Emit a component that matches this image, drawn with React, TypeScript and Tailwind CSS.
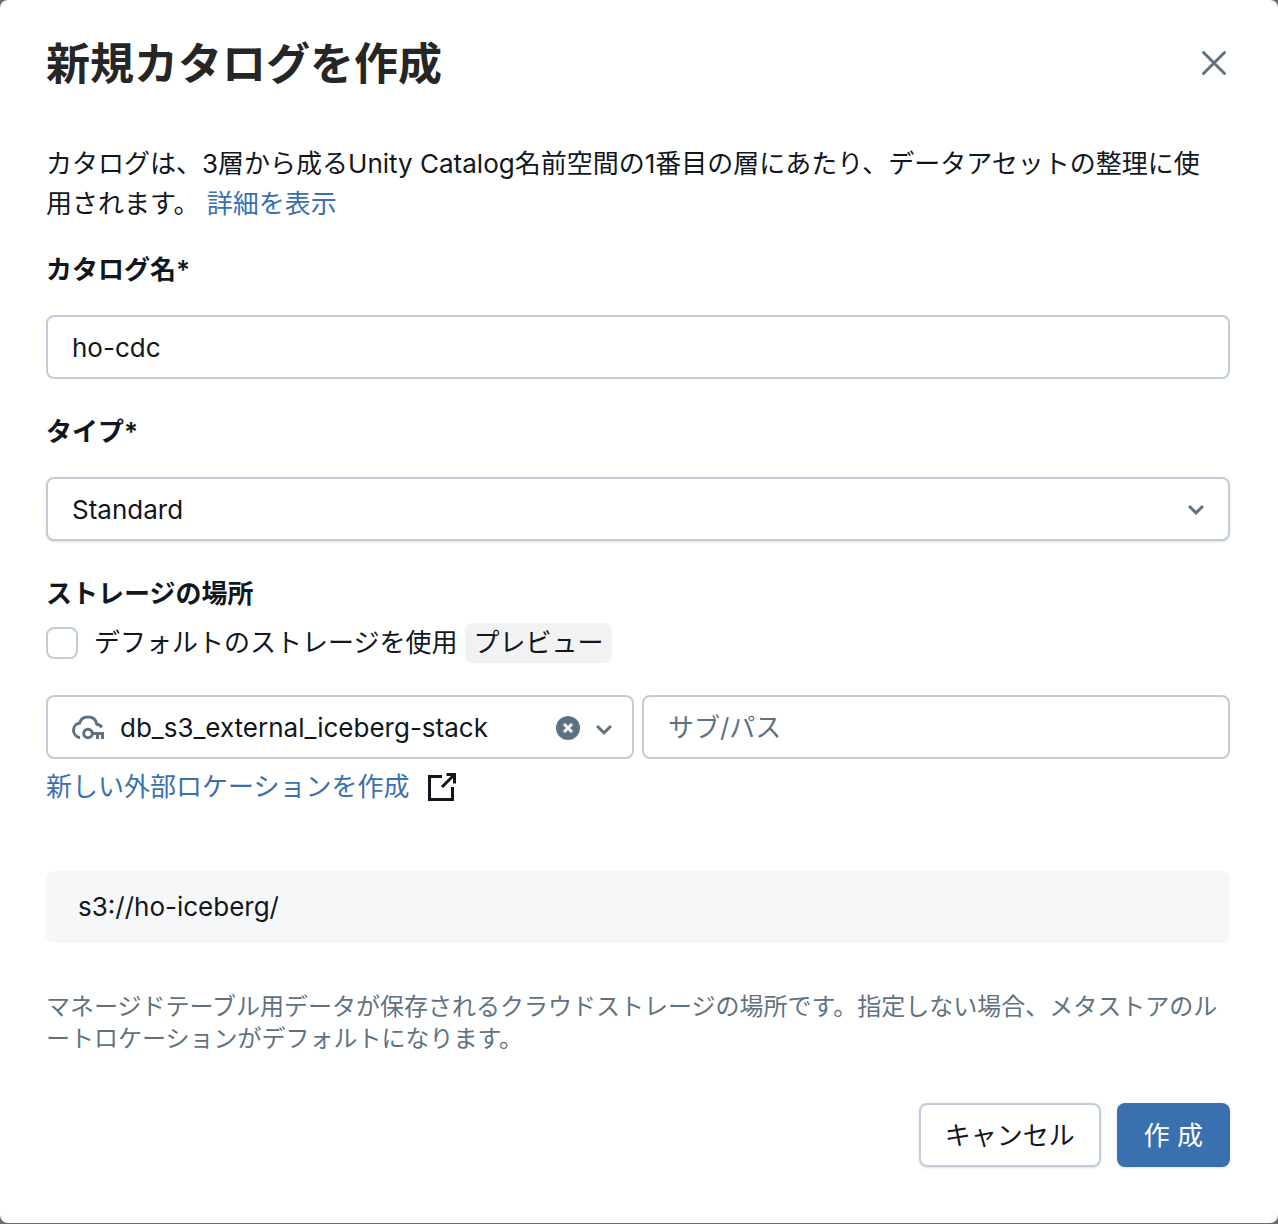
import React, { useState } from 'react';

const FIELD = 'h-16 w-full rounded-lg border-2 border-[#c0cdd8] bg-white text-[26px] text-[#11171c] outline-none placeholder:text-[#5f7281]';
const LINK = 'text-[#3a6fb0]';

function ChevronDown({ className }: { className?: string }) {
  return (
    <svg viewBox="0 0 16 16" className={className} fill="currentColor" aria-hidden="true">
      <path fillRule="evenodd" d="M8 8.917 10.947 6 12 7.042 8 11 4 7.042 5.053 6z" clipRule="evenodd" />
    </svg>
  );
}

function CloudKeyIcon({ className }: { className?: string }) {
  return (
    <svg viewBox="0 0 32 32" className={className} fill="none" stroke="currentColor" strokeWidth="3" aria-hidden="true">
      <path d="M8 26.8C4.2 26 1.5 23 1.5 19.2c0-3.7 2.6-6.7 6.2-7.3C8.6 8.2 12 6 16 6c4.6 0 8 2.8 8.8 7.2 2.3.3 4 1.4 5 3.2" />
      <circle cx="16" cy="22.5" r="4.3" />
      <path d="M20 22.5H30.5V28M25.5 22.5V28" />
    </svg>
  );
}

function NewWindowIcon({ className }: { className?: string }) {
  return (
    <svg viewBox="0 0 32 32" className={className} fill="none" stroke="currentColor" strokeWidth="3" aria-hidden="true">
      <path d="M16 5.5H3.5v23h23V16" transform="translate(1)" />
      <path d="M20.5 3.5h8V12.5M28 4 16 16" transform="translate(1)" />
    </svg>
  );
}

export default function App() {
  const [name, setName] = useState('ho-cdc');
  const [type, setType] = useState('standard');
  const [useDefault, setUseDefault] = useState(false);
  const [location, setLocation] = useState('db_s3_external_iceberg-stack');
  const [subPath, setSubPath] = useState('');

  return (
    <div className="min-h-screen bg-[#6b6b6b] pb-px font-['Inter','Noto_Sans_CJK_JP',sans-serif] text-[26px] text-[#11171c]">
      <div role="dialog" aria-labelledby="dialog-title" className="rounded-lg bg-white pt-8 pr-12 pb-14 pl-[46px]">
        <header className="flex items-center justify-between">
          <h2 id="dialog-title" className="text-[44px] leading-16 font-bold text-[#262626]">新規カタログを作成</h2>
          <button type="button" aria-label="閉じる" className="flex size-8 cursor-pointer items-center justify-center text-[#5f7281]">
            <svg viewBox="0 0 32 32" className="size-8" fill="none" stroke="currentColor" strokeWidth="3" strokeLinecap="round">
              <path d="M5.5 4.5 26.5 25.5M26.5 4.5 5.5 25.5" />
            </svg>
          </button>
        </header>

        <p className="mt-12 pr-2 leading-10">
          カタログは、3層から成るUnity Catalog名前空間の1番目の層にあたり、データアセットの整理に使用されます。{' '}
          <a href="#details" className={LINK}>詳細を表示</a>
        </p>

        <label htmlFor="catalog-name" className="mt-[26px] block leading-10 font-semibold">カタログ名*</label>
        <input id="catalog-name" value={name} onChange={(e) => setName(e.target.value)} className={`mt-[25px] px-6 ${FIELD}`} />

        <label htmlFor="catalog-type" className="mt-[33px] block leading-10 font-semibold">タイプ*</label>
        <div className="relative mt-[25px]">
          <select id="catalog-type" value={type} onChange={(e) => setType(e.target.value)} className={`appearance-none px-6 shadow-sm ${FIELD}`}>
            <option value="standard">Standard</option>
            <option value="foreign">Foreign</option>
          </select>
          <ChevronDown className="pointer-events-none absolute top-4 right-4.5 size-8 text-[#5f7281]" />
        </div>

        <h3 className="mt-[33px] leading-10 font-semibold">ストレージの場所</h3>
        <div className="mt-[9px] flex items-center gap-2">
          <label className="flex items-center gap-4 leading-10">
            <input
              type="checkbox"
              checked={useDefault}
              onChange={(e) => setUseDefault(e.target.checked)}
              className="size-8 appearance-none rounded-lg border-2 border-[#c0cdd8] checked:bg-[#3a6fb0]"
            />
            デフォルトのストレージを使用
          </label>
          <span className="rounded-lg bg-[#f2f2f2] px-2 leading-10">プレビュー</span>
        </div>

        <div className="mt-8 grid grid-cols-2 gap-2">
          <div className="relative">
            <select
              aria-label="外部ロケーション"
              value={location}
              onChange={(e) => setLocation(e.target.value)}
              className={`appearance-none pr-24 pl-18 ${FIELD}`}
            >
              <option value="" />
              <option value="db_s3_external_iceberg-stack">db_s3_external_iceberg-stack</option>
            </select>
            <CloudKeyIcon className="pointer-events-none absolute top-4 left-6.5 size-8 text-[#5f7281]" />
            {location && (
              <button
                type="button"
                aria-label="クリア"
                onClick={() => setLocation('')}
                className="absolute top-[21px] right-13.5 size-6 cursor-pointer rounded-full bg-[#5f7281] text-white"
              >
                <svg viewBox="0 0 24 24" className="size-6" fill="none" stroke="currentColor" strokeWidth="3">
                  <path d="M8 8 16 16M16 8 8 16" />
                </svg>
              </button>
            )}
            <ChevronDown className="pointer-events-none absolute top-4.5 right-3.5 size-8 text-[#5f7281]" />
          </div>
          <input aria-label="サブパス" placeholder="サブ/パス" value={subPath} onChange={(e) => setSubPath(e.target.value)} className={`px-6 ${FIELD}`} />
        </div>

        <a href="#new-location" className={`mt-2 flex items-center gap-4 leading-10 ${LINK}`}>
          新しい外部ロケーションを作成
          <NewWindowIcon className="size-8 text-[#11171c]" />
        </a>

        <div className="mt-16 rounded-lg bg-[#f6f7f9] px-8 py-4 leading-10">s3://ho-iceberg/</div>

        <p className="mt-12 text-[24px] leading-8 text-[#5f7281]">
          マネージドテーブル用データが保存されるクラウドストレージの場所です。指定しない場合、メタストアのルートロケーションがデフォルトになります。
        </p>

        <footer className="mt-12 flex justify-end gap-4">
          <button type="button" className="h-16 cursor-pointer rounded-lg border-2 border-[#c0cdd8] px-6 shadow-sm">キャンセル</button>
          <button type="button" className="h-16 cursor-pointer rounded-lg bg-[#3a6fb0] px-[27px] text-white shadow-sm">作 成</button>
        </footer>
      </div>
    </div>
  );
}
